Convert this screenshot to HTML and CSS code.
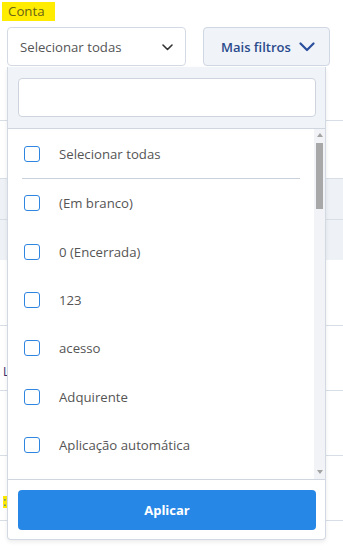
FILE: index.html
```html
<!DOCTYPE html>
<html lang="pt">
<head>
<meta charset="utf-8">
<title>Filtro Conta</title>
<link rel="stylesheet" href="styles.css">
</head>
<body>
<div class="page">
  <div class="label-row"><span class="label">Conta</span></div>
  <div class="filters">
    <div class="select">
      <span class="select-text">Selecionar todas</span>
      <svg class="chev-small" width="11" height="7" viewBox="0 0 11 7"><path d="M1 1 L5.5 5.5 L10 1" fill="none" stroke="#333" stroke-width="1.6" stroke-linecap="round" stroke-linejoin="round"/></svg>
    </div>
    <div class="more">
      <span>Mais filtros</span>
      <svg class="chev-blue" width="16" height="10" viewBox="0 0 16 10"><path d="M1.5 1.5 L8 8 L14.5 1.5" fill="none" stroke="#2a4f9c" stroke-width="2.2" stroke-linecap="round" stroke-linejoin="round"/></svg>
    </div>
  </div>
  <div class="bg-table">
    <div class="bg-row r1"></div>
    <div class="bg-row r2"></div>
    <div class="bg-row r3 shade"></div>
    <div class="bg-row r4 shade noline"></div>
    <div class="bg-row r5"></div>
    <div class="bg-row r6"><span class="frag">Lt</span></div>
    <div class="bg-row r7"></div>
    <div class="bg-row r8"><span class="frag hl">:i</span></div>
    <div class="bg-row r9 noline"></div>
  </div>

  <div class="panel">
    <div class="panel-head">
      <div class="search"></div>
    </div>
    <div class="list-wrap">
      <div class="list">
        <div class="item"><span class="box"></span><span class="txt">Selecionar todas</span></div>
        <div class="divider"></div>
        <div class="item"><span class="box"></span><span class="txt">(Em branco)</span></div>
        <div class="item"><span class="box"></span><span class="txt">0 (Encerrada)</span></div>
        <div class="item"><span class="box"></span><span class="txt">123</span></div>
        <div class="item"><span class="box"></span><span class="txt">acesso</span></div>
        <div class="item"><span class="box"></span><span class="txt">Adquirente</span></div>
        <div class="item"><span class="box"></span><span class="txt">Aplicação automática</span></div>
      </div>
      <div class="scrollbar">
        <div class="arrow up"></div>
        <div class="thumb"></div>
        <div class="spacer"></div>
        <div class="arrow down"></div>
      </div>
    </div>
    <div class="panel-foot">
      <button class="apply">Aplicar</button>
    </div>
  </div>
</div>
</body>
</html>
```

FILE: styles.css
```css
* { box-sizing: border-box; }
html, body { margin: 0; padding: 0; background: #fff; }
body {
  font-family: "Open Sans", "Liberation Sans", sans-serif;
  font-size: 13px;
  color: #555;
  width: 343px;
  height: 553px;
  overflow: hidden;
}
.page { position: relative; width: 343px; height: 553px; }

.label-row { height: 21px; padding: 2px 0 0 2px; }
.label {
  display: inline-block;
  height: 19px;
  line-height: 19px;
  padding: 0 10px 0 6px;
  background: #ffec00;
  color: #6a6418;
  font-size: 13.3px;
}

.filters {
  display: flex;
  margin-top: 6px;
  padding-left: 7px;
  height: 39px;
}
.select {
  width: 179px;
  height: 39px;
  border: 1px solid #d4dae3;
  border-radius: 4px;
  background: #fff;
  display: flex;
  align-items: center;
  justify-content: space-between;
  padding: 0 12px 0 12px;
}
.select-text { color: #555; font-size: 13.2px; }
.chev-small { margin-top: 1px; }
.more {
  margin-left: 17px;
  width: 127px;
  height: 39px;
  border: 1px solid #cfd7e2;
  border-radius: 4px;
  background: #f0f3f8;
  display: flex;
  align-items: center;
  padding-left: 17px;
  gap: 8px;
  color: #2a4b8c;
  font-weight: 600;
  font-size: 13px;
}
.chev-blue { margin-top: 1px; }

.bg-table { width: 343px; }
.bg-row { border-bottom: 1px solid #d8dee6; position: relative; }
.bg-row.noline { border-bottom: none; }
.bg-row.shade { background: #eef1f6; }
.r1 { height: 55px; }
.r2 { height: 58px; }
.r3 { height: 41px; }
.r4 { height: 40px; }
.r5 { height: 66px; }
.r6 { height: 65px; }
.r7 { height: 65px; }
.r8 { height: 65px; }
.r9 { height: 40px; }
.frag {
  position: absolute;
  left: 3px;
  font-size: 12px;
  line-height: 12px;
  color: #3b2f6b;
}
.r6 .frag { top: 40px; }
.r8 .frag { top: 40px; background: #ffec00; color: #3a6fc0; }

.panel {
  position: absolute;
  left: 7px;
  top: 67px;
  width: 319px;
  height: 473px;
  background: #fff;
  border: 1px solid #d3d9e2;
  border-top: none;
  border-radius: 0 0 4px 4px;
  box-shadow: 0 2px 4px rgba(0, 0, 0, 0.08);
  display: flex;
  flex-direction: column;
  overflow: hidden;
}
.panel-head {
  background: #f0f3f8;
  padding: 11px 9px 11px 10px;
  border-bottom: 1px solid #cfd6e0;
  height: 62px;
  flex: 0 0 62px;
}
.search {
  width: 298px;
  height: 39px;
  background: #fff;
  border: 1px solid #cdd4de;
  border-radius: 4px;
}

.list-wrap {
  display: flex;
  height: 351px;
  flex: 0 0 351px;
  border-bottom: 1px solid #cfd6e0;
}
.list {
  flex: 1;
  overflow: hidden;
  display: flex;
  flex-direction: column;
}
.item {
  height: 48.4px;
  flex: 0 0 48.4px;
  display: flex;
  align-items: center;
  padding-left: 16px;
}
.item:first-child { height: 49px; flex-basis: 49px; }
.box {
  width: 16px;
  height: 16px;
  border: 1.5px solid #2f86e1;
  border-radius: 3px;
  flex: 0 0 16px;
}
.txt { margin-left: 19px; color: #555; font-size: 13.2px; }
.divider {
  flex: 0 0 1px;
  height: 1px;
  background: #c9d1dc;
  margin: 0 14px 0 14px;
}

.scrollbar {
  width: 11px;
  flex: 0 0 11px;
  background: #f1f3f7;
  display: flex;
  flex-direction: column;
  align-items: center;
}
.arrow { width: 0; height: 0; flex: 0 0 auto; }
.arrow.up {
  margin-top: 4px;
  margin-bottom: 6px;
  border-left: 3.5px solid transparent;
  border-right: 3.5px solid transparent;
  border-bottom: 4px solid #a3a3a3;
}
.arrow.down {
  margin-bottom: 5px;
  border-left: 3.5px solid transparent;
  border-right: 3.5px solid transparent;
  border-top: 4px solid #a3a3a3;
}
.thumb {
  width: 7px;
  height: 66px;
  flex: 0 0 66px;
  background: #a8a8a8;
}
.spacer { flex: 1; }

.panel-foot {
  padding: 10px 9px 0 10px;
  flex: 1;
}
.apply {
  display: block;
  width: 298px;
  height: 40px;
  border: none;
  border-radius: 4px;
  background: #2787e6;
  color: #fff;
  font-family: "Open Sans", "Liberation Sans", sans-serif;
  font-size: 13px;
  font-weight: 700;
  cursor: pointer;
}
```
